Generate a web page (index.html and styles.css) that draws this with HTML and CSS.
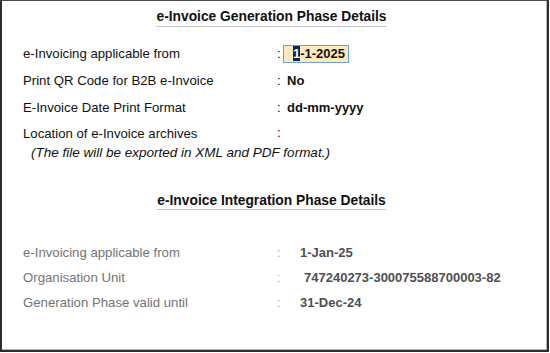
FILE: index.html
```html
<!DOCTYPE html>
<html>
<head>
<meta charset="utf-8">
<link rel="stylesheet" href="styles.css">
</head>
<body>
<div class="frame">
  <div class="heading"><span class="title">e-Invoice Generation Phase Details</span></div>
  <div class="section gen">
    <div class="row"><span class="label">e-Invoicing applicable from</span><span class="colon">:</span><span class="value"><span class="field"><span class="sel">1</span>-1-2025</span></span></div>
    <div class="row"><span class="label">Print QR Code for B2B e-Invoice</span><span class="colon">:</span><span class="value">No</span></div>
    <div class="row"><span class="label">E-Invoice Date Print Format</span><span class="colon">:</span><span class="value">dd-mm-yyyy</span></div>
    <div class="row loc"><span class="label">Location of e-Invoice archives</span><span class="colon">:</span><span class="value"></span></div>
    <div class="note">(The file will be exported in XML and PDF format.)</div>
  </div>
  <div class="heading second"><span class="title">e-Invoice Integration Phase Details</span></div>
  <div class="section integ">
    <div class="row"><span class="label">e-Invoicing applicable from</span><span class="colon">:</span><span class="value">1-Jan-25</span></div>
    <div class="row"><span class="label">Organisation Unit</span><span class="colon">:</span><span class="value org">747240273-300075588700003-82</span></div>
    <div class="row"><span class="label">Generation Phase valid until</span><span class="colon">:</span><span class="value">31-Dec-24</span></div>
  </div>
</div>
</body>
</html>
```
FILE: styles.css
```css
html, body {
  margin: 0;
  padding: 0;
  background: #ffffff;
}
body {
  font-family: "Liberation Sans", Arial, sans-serif;
  font-size: 13px;
  color: #000;
}
.frame {
  box-sizing: border-box;
  width: 549px;
  height: 352px;
  border-left: 2px solid #2e2e2e;
  border-top: 1px solid #4a4a4a;
  border-right: 2px solid #2e2e2e;
  border-bottom: 2px solid #2e2e2e;
  box-shadow: inset -1px -1px 0 #b5b5b5;
  padding-top: 8px;
}
.heading {
  text-align: center;
  padding-right: 6px;
  line-height: 16px;
}
.heading.second {
  margin-top: 32px;
}
.title {
  display: inline-block;
  font-size: 13.8px;
  font-weight: bold;
  color: #111;
  border-bottom: 1px solid #c4c4c4;
  padding-bottom: 1px;
}
.second .title {
  padding-bottom: 0;
}
.section {
  padding-left: 21px;
}
.gen {
  margin-top: 13px;
}
.integ {
  margin-top: 30px;
}
.row {
  display: grid;
  grid-template-columns: 254px 10px auto;
  align-items: center;
}
.gen .row {
  height: 27px;
}
.gen .row.loc {
  height: 24px;
}
.integ .row {
  height: 25px;
}
.label {
  color: #111;
  font-size: 13.2px;
}
.colon {
  line-height: 16px;
}
.value {
  font-weight: bold;
  color: #111;
}
.field {
  display: inline-block;
  box-sizing: border-box;
  height: 18px;
  line-height: 16px;
  margin-left: -4px;
  padding: 0 3px 0 9px;
  background: #fde9bb;
  border: 1px solid #6f9fd6;
}
.sel {
  background: #0b1f63;
  color: #ffffff;
}
.note {
  font-style: italic;
  font-size: 13.5px;
  line-height: 16px;
  padding-left: 8px;
  color: #111;
}
.integ .label {
  color: #747474;
}
.integ .colon {
  color: #a8a8a8;
}
.integ .value {
  color: #4f4f4f;
  padding-left: 13px;
}
.integ .value.org {
  padding-left: 17px;
}
```
